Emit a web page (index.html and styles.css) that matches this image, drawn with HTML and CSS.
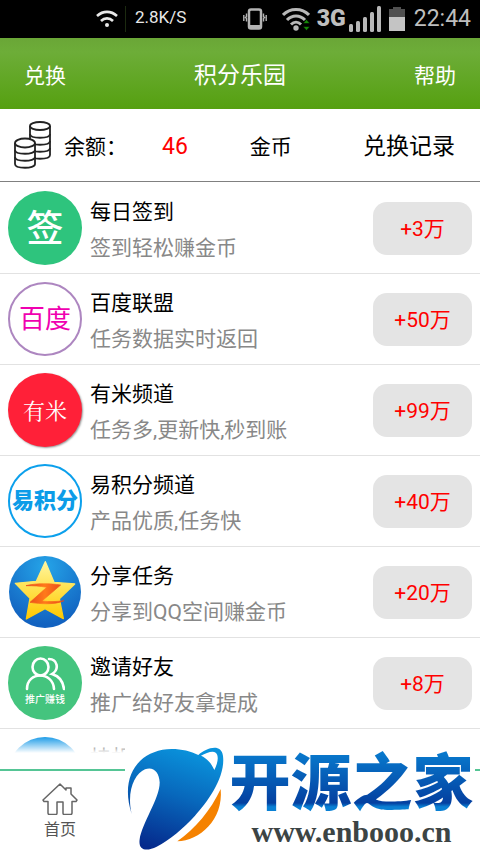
FILE: index.html
```html
<!DOCTYPE html>
<html lang="zh-CN">
<head>
<meta charset="utf-8">
<meta name="viewport" content="width=device-width, initial-scale=1">
<title>积分乐园</title>
<link rel="stylesheet" href="styles.css">
</head>
<body>
<div class="status">
  <div class="status-group">
    <svg width="22" height="18" viewBox="0 0 22 18" fill="none" stroke="#e8e8e8" stroke-width="2.6"><path d="M1 6C7 0.500 15 0.500 21 6M5 11C8.500 7.500 13.500 7.500 17 11"/><circle cx="11" cy="15" r="2" fill="#e8e8e8" stroke="none"/></svg>
    <span class="status-rule"></span>
    <span class="speed">2.8K/S</span>
  </div>
  <div class="status-group status-right">
    <svg width="24" height="22" viewBox="0 0 24 22" fill="none" stroke="#b4b4b4"><rect x="6" y="1.500" width="12" height="19" rx="2" stroke-width="2.500"/><path d="M6 18.500h12" stroke-width="3"/><path d="M3.500 5.500v3l-1 1 1 1v3M20.500 5.500v3l1 1-1 1v3M.8 7v6M23.200 7v6" stroke-width="1.400"/></svg>
    <svg class="wifi" width="28" height="24" viewBox="0 0 28 24" fill="none" stroke="#b8b8b8" stroke-width="3"><path d="M1 8C8 .5 20 .5 27 8M5 13C10 7.500 18 7.500 23 13M9 17.500C12 14.500 16 14.500 19 17.500"/><circle cx="14" cy="21" r="2.700" fill="#b8b8b8" stroke="none"/><path d="M21 16.500l3.500-4 3.500 4zM21 19.500h7l-3.500 4z" fill="#168a08" stroke="#000" stroke-width=".6"/></svg>
    <span class="net">3G</span>
    <svg width="32" height="26" viewBox="0 0 32 26" fill="#b8b8b8"><rect y="18" width="4" height="8" rx="1.500"/><rect x="7" y="15" width="4" height="11" rx="1.500"/><rect x="14" y="11" width="4" height="15" rx="1.500"/><rect x="21" y="6" width="4" height="20" rx="1.500"/><rect x="28" width="4" height="26" rx="1.500"/></svg>
    <svg class="battery" width="16" height="24" viewBox="0 0 16 24"><path d="M0 2h4V0h8v2h4v8H0z" fill="#505050"/><path d="M0 10h16v14H0z" fill="#c4c4c4"/></svg>
    <span class="clock">22:44</span>
  </div>
</div>
<header class="header">
  <a href="#exchange">兑换</a>
  <h1>积分乐园</h1>
  <a href="#help">帮助</a>
</header>
<section class="balance">
  <svg width="38" height="48" viewBox="0 0 38 48" fill="#fff" stroke="#222" stroke-width="1.800"><path d="M16 5v29c0 5 20 5 20 0V5"/><path d="M16 13c0 5 20 5 20 0M16 20c0 5 20 5 20 0M16 27c0 5 20 5 20 0" fill="none"/><ellipse cx="26" cy="5" rx="10" ry="4"/><path d="M1 22v21c0 5 20 5 20 0V22"/><path d="M1 29c0 5 20 5 20 0M1 36c0 5 20 5 20 0" fill="none"/><ellipse cx="11" cy="22" rx="10" ry="4.500"/></svg>
  <span class="balance-label">余额：</span>
  <span class="amount">46</span>
  <span class="unit">金币</span>
  <a class="records" href="#records">兑换记录</a>
</section>
<main class="list-wrap">
  <ul class="list">
    <li class="row">
      <span class="badge badge-sign">签</span>
      <div class="info"><h2>每日签到</h2><p>签到轻松赚金币</p></div>
      <button class="reward">+3万</button>
    </li>
    <li class="row">
      <span class="badge badge-baidu">百度</span>
      <div class="info"><h2>百度联盟</h2><p>任务数据实时返回</p></div>
      <button class="reward">+50万</button>
    </li>
    <li class="row">
      <span class="badge badge-youmi">有米</span>
      <div class="info"><h2>有米频道</h2><p>任务多,更新快,秒到账</p></div>
      <button class="reward">+99万</button>
    </li>
    <li class="row">
      <span class="badge badge-yi">易积分</span>
      <div class="info"><h2>易积分频道</h2><p>产品优质,任务快</p></div>
      <button class="reward">+40万</button>
    </li>
    <li class="row">
      <svg class="badge" viewBox="0 0 222 222">
        <defs>
          <radialGradient id="sky" cx=".5" cy=".15" r=".8"><stop offset="0" stop-color="#25a4e8"/><stop offset="1" stop-color="#1262c0"/></radialGradient>
          <linearGradient id="gold" x2="0" y2="1"><stop offset="0" stop-color="#fff6a0"/><stop offset=".5" stop-color="#ffe04a"/><stop offset="1" stop-color="#ffc800"/></linearGradient>
          <linearGradient id="zed" x2="1"><stop offset="0" stop-color="#e8431a"/><stop offset=".5" stop-color="#ff7a1a"/><stop offset="1" stop-color="#e8431a"/></linearGradient>
        </defs>
        <circle cx="111" cy="111" r="108" fill="url(#sky)"/>
        <path d="M112 20l26 62 62 5-46 44 12 60-55-30-56 31 11-62-44-45 63-6z" fill="url(#gold)" stroke="url(#gold)" stroke-width="4" stroke-linejoin="round"/>
        <path d="M54 92c32-8 72-7 104-2l-56 48c22 3 44 2 66-1-28 13-70 10-102 5l50-45c-20-4-40-5-62-5z" fill="url(#zed)" stroke="url(#zed)" stroke-width="2"/>
      </svg>
      <div class="info"><h2>分享任务</h2><p>分享到QQ空间赚金币</p></div>
      <button class="reward">+20万</button>
    </li>
    <li class="row">
      <span class="badge badge-invite">
        <svg width="40" height="34" viewBox="0 0 40 34" fill="none" stroke="#fff" stroke-width="2.600" stroke-linecap="round"><ellipse cx="15.500" cy="10" rx="8" ry="8.500"/><path d="M2 32C2 14 28 14 29 32M24 2c8 0 11 10 3 15 7 2 11 7 12 15"/></svg>
        <span>推广赚钱</span>
      </span>
      <div class="info"><h2>邀请好友</h2><p>推广给好友拿提成</p></div>
      <button class="reward">+8万</button>
    </li>
    <li class="row">
      <span class="badge badge-blue"></span>
      <div class="info info-partial"><h2>挂机</h2></div>
    </li>
  </ul>
</main>
<nav class="tabs">
  <a class="tab" href="#home">
    <svg width="36" height="32" viewBox="0 0 36 32" fill="none" stroke="#666" stroke-width="1.500" stroke-linejoin="round"><path d="M18 1L1 17l1 1.500h4V30c0 1 .5 1.500 1.500 1.500H14c1 0 1-.5 1-1.500V19h6v11c0 1 0 1.500 1 1.500h6.500c1 0 1.500-.5 1.500-1.500V18.500h4l1-1.500-6-6V5h-5v2z"/></svg>
    <span>首页</span>
  </a>
</nav>
<aside class="mark">
  <svg width="102" height="104" viewBox="18 18 306 312">
    <defs><linearGradient id="orb" x1=".6" x2=".3" y2="1"><stop offset="0" stop-color="#0a93dc"/><stop offset=".45" stop-color="#0868bc"/><stop offset="1" stop-color="#052a8c"/></linearGradient></defs>
    <path fill="url(#orb)" fill-rule="evenodd" d="M35 222C-3 105 60 28 155 27c30 0 58 7 80 18 22-19 68-38 74 3 8 62-45 137-84 179-35 38-75 72-115 93-30 15-56 12-51-22 6-46 61-125 60-171-1-31-20-49-44-39-31 13-56 66-40 134zM243 47c18 8 32 23 40 43 10-18 15-43 4-52-9-8-28 1-44 9z"/>
    <path fill="#f58200" d="M302 147c-30 64-76 119-130 157 66-2 139-64 130-157z"/>
  </svg>
  <div class="mark-text"><strong>开源之家</strong><span>www.enbooo.cn</span></div>
</aside>
</body>
</html>
```
FILE: styles.css
```css
* { box-sizing: border-box; margin: 0; padding: 0; }

body {
  display: flex;
  flex-direction: column;
  height: 100vh;
  overflow: hidden;
  background: #fff;
  color: #000;
  font: 400 21px/36px Roboto, "Noto Sans CJK SC", sans-serif;
}

a { color: inherit; text-decoration: none; }
h1, h2 { font-size: inherit; font-weight: inherit; }

.status {
  display: flex;
  flex: none;
  justify-content: space-between;
  height: 38px;
  padding: 0 9px 0 96px;
  background: #000;
}
.status-group { display: flex; align-items: center; }
.status-group svg { flex: none; }
.status-rule { width: 1px; height: 26px; margin: 0 9px 0 7px; background: #1c2a10; }
.speed { padding-bottom: 4px; color: #e8e8e8; font-size: 17px; }
.status-right { color: #bebebe; }
.wifi { margin-left: 15px; }
.net { margin: 0 3px 0 7px; font-size: 23px; font-weight: 900; }
.battery { margin: 0 9px 0 8px; }
.clock { font-size: 23px; }

.header {
  display: flex;
  flex: none;
  align-items: center;
  justify-content: space-between;
  height: 71px;
  padding: 4px 24px 0;
  background: linear-gradient(#6aa637, #6dad38 20%, #55a010);
  color: #fff;
}
.header h1 { font-size: 23px; }

.balance {
  display: flex;
  flex: none;
  align-items: center;
  height: 73px;
  padding: 4px 25px 0 14px;
  border-bottom: 1px solid #808080;
}
.balance svg { margin-bottom: 4px; }
.balance-label { margin-left: 12px; }
.amount { margin-left: 35px; color: #f00; font-size: 23px; }
.unit { margin-left: 62px; }
.records { margin-left: auto; font-size: 23px; }

.list-wrap { position: relative; flex: 1; min-height: 0; overflow: hidden; }
.list-wrap::after {
  position: absolute;
  right: 0;
  bottom: 0;
  left: 0;
  height: 16px;
  background: linear-gradient(rgba(255, 255, 255, 0), #fff);
  content: "";
}
.list { padding-top: 1px; list-style: none; }
.row {
  display: flex;
  align-items: center;
  gap: 8px;
  height: 91px;
  padding: 0 8px;
  border-bottom: 1px solid #e2e2e2;
}
.badge {
  display: flex;
  flex: none;
  align-items: center;
  justify-content: center;
  width: 74px;
  height: 74px;
  border-radius: 50%;
  white-space: nowrap;
}
.badge-sign { padding-top: 4px; background: #2ec47d; color: #fff; font-size: 37px; font-weight: 500; }
.badge-baidu { border: 2px solid #ad86c0; color: #f000b0; font-size: 26px; }
.badge-youmi { background: #ff2038; box-shadow: 1px 1px 2px #999; color: #fff; font-family: "Noto Serif CJK SC", "Noto Sans CJK SC", serif; font-size: 22px; }
.badge-yi { border: 2px solid #0ca0ec; color: #0c9ce8; font-size: 22px; font-weight: 900; }
.badge-invite { flex-direction: column; background: #44c47e; color: #fff; font-size: 10px; font-weight: 500; line-height: 18px; }
.badge-blue { background: #1f9de8; }
.info { flex: 1; min-width: 0; padding-top: 4px; }
.info p { color: #888; }
.info-partial { align-self: flex-start; padding-top: 11px; }
.reward {
  width: 99px;
  height: 53px;
  padding-top: 2px;
  border: 0;
  border-radius: 14px;
  background: #e4e4e4;
  color: #f00;
  font: inherit;
}

.tabs {
  display: flex;
  flex: none;
  height: 101px;
  padding-top: 16px;
}
.tab {
  display: flex;
  flex: 1;
  flex-direction: column;
  align-items: flex-start;
  padding: 12px 42px 0;
  border-top: 2px solid #55c595;
  color: #555;
  font-size: 16px;
  line-height: 30px;
}
.tab span { width: 36px; text-align: center; }

.mark {
  position: fixed;
  right: 5px;
  bottom: 0;
  display: flex;
  align-items: flex-start;
  width: 350px;
  height: 108px;
  padding-left: 1px;
  background: #fff;
}
.mark svg { flex: none; }
.mark-text {
  display: flex;
  flex: 1;
  flex-direction: column;
  align-items: center;
  white-space: nowrap;
}
.mark strong {
  background: linear-gradient(#0878cc 10%, #0440a0 75%, #0a80d4 80%);
  background-clip: text;
  color: transparent;
  font-size: 61px;
  font-weight: 900;
  line-height: 76px;
}
.mark-text span { color: #3c4444; font: bold 30px/20px "Liberation Serif", serif; }
```
